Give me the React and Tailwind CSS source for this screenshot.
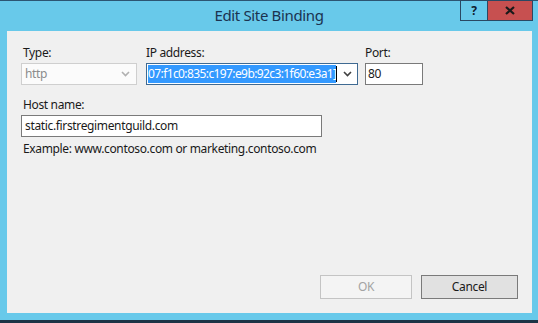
export default function App() {
  return (
    <div className="relative w-[538px] h-[323px] bg-[#68c9ea] flex flex-col font-['Noto_Sans',sans-serif] text-[12px] tracking-[-0.35px] text-[#1a1a1a] overflow-hidden">
      {/* top edge */}
      <div className="h-px bg-[#2c5572]" />

      {/* Title bar */}
      <div className="h-[30px] flex items-center justify-center">
        <span className="text-[15px] text-[#1b3350] leading-none pb-[2px]">Edit Site Binding</span>
      </div>

      {/* Caption buttons */}
      <div className="absolute top-0 right-[5px] flex h-[21px] border border-[#2a4863]">
        <div className="w-[27px] flex items-center justify-center border-r border-[#2a4863] font-bold text-[12px] text-[#10202e]">
          ?
        </div>
        <div className="w-[44px] bg-[#c75050] flex items-center justify-center">
          <svg width="10" height="9" viewBox="0 0 10 9">
            <path d="M1 1 L9 8 M9 1 L1 8" stroke="#1a1a1a" strokeWidth="2.2" />
          </svg>
        </div>
      </div>

      {/* Client area */}
      <div className="mx-[7px] w-[525px] h-[282px] bg-[#f0f0f0] flex flex-col px-[14px] pt-[14px] pb-[14px]">
        <div className="flex">
          <div className="flex flex-col w-[116px]">
            <span className="h-[16px] leading-[16px] pl-[2px]">Type:</span>
            <div className="mt-[2px] h-[22px] border border-[#cfcfcf] bg-[#fbfbfb] flex items-center pl-[3px] pr-[6px]">
              <span className="flex-1 text-[#8c8c8c]">http</span>
              <svg width="9" height="6" viewBox="0 0 9 6">
                <path d="M1 1 L4.5 4.5 L8 1" fill="none" stroke="#b0b0b0" strokeWidth="1.6" />
              </svg>
            </div>
          </div>

          <div className="flex flex-col w-[212px] ml-[9px]">
            <span className="h-[16px] leading-[16px]">IP address:</span>
            <div className="mt-[2px] h-[22px] border border-[#3f6a92] bg-white flex items-center pl-px pr-[5px]">
              <span className="h-[18px] bg-[#3399ff] text-white whitespace-nowrap leading-[18px] tracking-[-0.6px]">
                07:f1c0:835:c197:e9b:92c3:1f60:e3a1]
              </span>
              <div className="w-px h-[16px] bg-black" />
              <div className="flex-1" />
              <svg width="9" height="6" viewBox="0 0 9 6">
                <path d="M1 1 L4.5 4.5 L8 1" fill="none" stroke="#404040" strokeWidth="1.6" />
              </svg>
            </div>
          </div>

          <div className="flex flex-col w-[58px] ml-[7px]">
            <span className="h-[16px] leading-[16px]">Port:</span>
            <div className="mt-[2px] h-[22px] border border-[#7a7a7a] bg-white flex items-center pl-[2px]">
              80
            </div>
          </div>
        </div>

        <span className="mt-[12px] h-[16px] leading-[16px] pl-[2px]">Host name:</span>
        <div className="mt-[2px] w-[301px] h-[22px] border border-[#7a7a7a] bg-white flex items-center pl-[3px]">
          static.firstregimentguild.com
        </div>

        <span className="mt-[4px] h-[16px] leading-[16px] pl-[2px]">
          Example: www.contoso.com or marketing.contoso.com
        </span>

        <div className="flex-1" />

        <div className="flex justify-end gap-[9px]">
          <button className="w-[92px] h-[24px] border border-[#c4c4c4] bg-[#f4f4f4] text-[#a3a3a3]">
            OK
          </button>
          <button className="w-[97px] h-[24px] border border-[#7a7a7a] bg-[#e1e1e1] text-[#1a1a1a]">
            Cancel
          </button>
        </div>
      </div>

      {/* bottom border */}
      <div className="flex-1" />
      <div className="h-[3px] bg-[#1c3446]" />
    </div>
  )
}
